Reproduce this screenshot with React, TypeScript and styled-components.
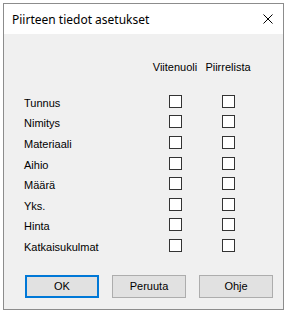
import { Fragment } from 'react';
import styled, { createGlobalStyle } from 'styled-components';

const GlobalStyle = createGlobalStyle`
  html, body {
    margin: 0;
    padding: 0;
    background: #ffffff;
  }
  body {
    font-family: "Liberation Sans", Arial, sans-serif;
    font-size: 11px;
    color: #000;
  }
`;

const Page = styled.div`
  padding: 3px 0 0 3px;
`;

const Window = styled.div`
  width: 281px;
  height: 307px;
  box-sizing: border-box;
  border: 1px solid #8c8c8c;
  background: #f0f0f0;
  display: flex;
  flex-direction: column;
`;

const TitleBar = styled.div`
  height: 30px;
  background: #ffffff;
  display: flex;
  align-items: center;
  justify-content: space-between;
  padding: 0 9px 0 8px;
`;

const Title = styled.span`
  font-family: "Noto Sans", "Open Sans", sans-serif;
  font-size: 12px;
  color: #000;
`;

const CloseButton = styled.button`
  width: 12px;
  height: 12px;
  padding: 0;
  border: none;
  background: none;
  display: flex;
  align-items: center;
  justify-content: center;
`;

const Body = styled.div`
  flex: 1;
  display: flex;
  flex-direction: column;
  padding: 27px 0 0 20px;
`;

const Grid = styled.div`
  display: grid;
  grid-template-columns: 127px 48px 58px;
  grid-auto-rows: 20.6px;
`;

const HeaderRow = styled.div`
  display: grid;
  grid-template-columns: 127px 48px 58px;
  height: 13px;
  line-height: 13px;
  margin-bottom: 17px;
`;

const HeaderCell = styled.span`
  text-align: center;
  white-space: nowrap;
`;

const Label = styled.span`
  display: flex;
  align-items: center;
  padding-top: 3px;
`;

const CheckCell = styled.div`
  display: flex;
  align-items: center;
  justify-content: center;
`;

const CheckBox = styled.span`
  width: 13px;
  height: 13px;
  box-sizing: border-box;
  border: 1px solid #333333;
  background: #ffffff;
`;

const ButtonRow = styled.div`
  display: flex;
  gap: 13px;
  margin-top: 19px;
  padding-left: 1px;
`;

const Button = styled.button<{ $default?: boolean }>`
  width: 74px;
  height: 23px;
  box-sizing: border-box;
  background: #e1e1e1;
  border: ${(p) => (p.$default ? '2px solid #0078d7' : '1px solid #adadad')};
  font-family: "Liberation Sans", Arial, sans-serif;
  font-size: 11px;
  color: #000;
  padding: 0;
`;

const rows = ['Tunnus', 'Nimitys', 'Materiaali', 'Aihio', 'Määrä', 'Yks.', 'Hinta', 'Katkaisukulmat'];

export default function App() {
  return (
    <>
      <GlobalStyle />
      <Page>
        <Window>
          <TitleBar>
            <Title>Piirteen tiedot asetukset</Title>
            <CloseButton aria-label="Sulje">
              <svg width="10" height="10" viewBox="0 0 10 10">
                <path d="M0.5 0.5 L9.5 9.5 M9.5 0.5 L0.5 9.5" stroke="#000" strokeWidth="1" />
              </svg>
            </CloseButton>
          </TitleBar>
          <Body>
            <HeaderRow>
              <span />
              <HeaderCell>Viitenuoli</HeaderCell>
              <HeaderCell>Piirrelista</HeaderCell>
            </HeaderRow>
            <Grid>
              {rows.map((r) => (
                <Fragment key={r}>
                  <Label>{r}</Label>
                  <CheckCell>
                    <CheckBox />
                  </CheckCell>
                  <CheckCell>
                    <CheckBox />
                  </CheckCell>
                </Fragment>
              ))}
            </Grid>
            <ButtonRow>
              <Button $default>OK</Button>
              <Button>Peruuta</Button>
              <Button>Ohje</Button>
            </ButtonRow>
          </Body>
        </Window>
      </Page>
    </>
  );
}
